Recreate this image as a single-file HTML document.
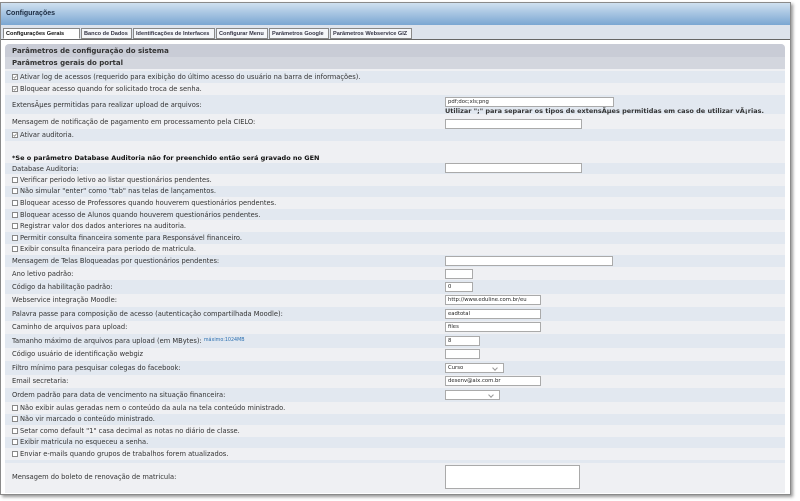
<!DOCTYPE html>
<html><head><meta charset="utf-8"><style>
*{margin:0;padding:0;box-sizing:border-box}
body{width:800px;height:501px;background:#fff;position:relative;overflow:hidden;font-family:"DejaVu Sans","Liberation Sans",sans-serif;font-size:6.7px;color:#333}
#frame{position:absolute;left:0;top:2px;width:791px;height:493px;border:1px solid #8a8a8a;box-shadow:2px 2px 3px #999;background:#fff}
#hdr{position:absolute;left:1px;top:3px;width:789px;height:22px;background:linear-gradient(#cfe0f0,#7aa6d2);font:bold 7px "Liberation Sans",sans-serif;color:#1a2a40;padding:7px 5px}
#tabbar{position:absolute;left:1px;top:25px;width:789px;height:15px;background:#dde3ec;border-bottom:1px solid #666}
.tab{position:absolute;top:3px;height:11px;border:1px solid #888;background:#f4f6f9;font:bold 5.6px "Liberation Sans",sans-serif;color:#334;padding:2px 2px;white-space:nowrap}
.tab.a{background:#fff;border-bottom-color:#fff;color:#111}
#panel{position:absolute;left:5px;top:44px;width:780px;height:449px;background:#eff0f3;border-radius:4px 4px 0 0}
.r{position:absolute;left:5px;width:780px;padding-left:7px;display:flex;align-items:center;white-space:nowrap}
.b{background:#e2e8f0}.g{background:#eff0f3}
.h{background:#c9ccd6;font-weight:bold;font-size:7px;color:#333}
.cb{display:inline-block;width:6px;height:6px;border:1px solid #888;background:#fff;margin-right:2px;position:relative}
.cb svg{position:absolute;left:0;top:0}
.in{position:absolute;height:10px;background:#fff;border:1px solid #aaa;font-size:5.3px;padding:1px 2px;color:#222}
.sel::after{content:"";position:absolute;right:6px;top:2px;width:3px;height:3px;border-right:1px solid #999;border-bottom:1px solid #999;transform:rotate(45deg)}
</style></head><body>
<div id="frame"></div>
<div id="hdr">Configurações</div>
<div id="tabbar">
<div class="tab a" style="left:2px;width:77px">Configurações Gerais</div>
<div class="tab" style="left:80px;width:51px">Banco de Dados</div>
<div class="tab" style="left:132px;width:82px">Identificações de Interfaces</div>
<div class="tab" style="left:215px;width:52px">Configurar Menu</div>
<div class="tab" style="left:268px;width:60px">Parâmetros Google</div>
<div class="tab" style="left:329px;width:82px">Parâmetros Webservice GIZ</div>
</div>
<div id="panel"></div>
<div class="r h" style="top:44px;height:13px;border-radius:4px 4px 0 0">Parâmetros de configuração do sistema</div>
<div class="r h" style="top:57px;height:12px;background:#d3d6de">Parâmetros gerais do portal</div>
<div class="r b" style="top:71px;height:12px"><span class="cb"><svg width="4" height="4" viewBox="0 0 4 4"><path d="M0.5 2 L1.6 3.2 L3.6 0.6" fill="none" stroke="#777" stroke-width="0.7"/></svg></span>Ativar log de acessos (requerido para exibição do último acesso do usuário na barra de informações).</div>
<div class="r g" style="top:83px;height:12px"><span class="cb"><svg width="4" height="4" viewBox="0 0 4 4"><path d="M0.5 2 L1.6 3.2 L3.6 0.6" fill="none" stroke="#777" stroke-width="0.7"/></svg></span>Bloquear acesso quando for solicitado troca de senha.</div>
<div class="r b" style="top:95px;height:19px">ExtensÃµes permitidas para realizar upload de arquivos:</div>
<div class="r g" style="top:114px;height:15px">Mensagem de notificação de pagamento em processamento pela CIELO:</div>
<div class="r b" style="top:129px;height:12px"><span class="cb"><svg width="4" height="4" viewBox="0 0 4 4"><path d="M0.5 2 L1.6 3.2 L3.6 0.6" fill="none" stroke="#777" stroke-width="0.7"/></svg></span>Ativar auditoria.</div>
<div class="r g" style="top:141px;height:11px"></div>
<div class="r g" style="top:152px;height:11px;font-weight:bold;color:#111;font-size:6.5px">*Se o parâmetro Database Auditoria não for preenchido então será gravado no GEN</div>
<div class="r b" style="top:163px;height:11px">Database Auditoria:</div>
<div class="r g" style="top:174px;height:11.6px"><span class="cb"></span>Verificar periodo letivo ao listar questionários pendentes.</div>
<div class="r b" style="top:185.6px;height:11.6px"><span class="cb"></span>Não simular "enter" como "tab" nas telas de lançamentos.</div>
<div class="r g" style="top:197.2px;height:11.6px"><span class="cb"></span>Bloquear acesso de Professores quando houverem questionários pendentes.</div>
<div class="r b" style="top:208.8px;height:11.6px"><span class="cb"></span>Bloquear acesso de Alunos quando houverem questionários pendentes.</div>
<div class="r g" style="top:220.4px;height:11.6px"><span class="cb"></span>Registrar valor dos dados anteriores na auditoria.</div>
<div class="r b" style="top:232px;height:11.6px"><span class="cb"></span>Permitir consulta financeira somente para Responsável financeiro.</div>
<div class="r g" style="top:243.6px;height:11.6px"><span class="cb"></span>Exibir consulta financeira para periodo de matricula.</div>
<div class="r b" style="top:255.2px;height:12px">Mensagem de Telas Bloqueadas por questionários pendentes:</div>
<div class="r g" style="top:267.2px;height:13px">Ano letivo padrão:</div>
<div class="r b" style="top:280.2px;height:13.5px">Código da habilitação padrão:</div>
<div class="r g" style="top:293.7px;height:13.5px">Webservice integração Moodle:</div>
<div class="r b" style="top:307.2px;height:13.5px">Palavra passe para composição de acesso (autenticação compartilhada Moodle):</div>
<div class="r g" style="top:320.7px;height:13.5px">Caminho de arquivos para upload:</div>
<div class="r b" style="top:334.2px;height:13.5px">Tamanho máximo de arquivos para upload (em MBytes):&nbsp;<span style="color:#2a6fb0;font-size:4.8px">máximo:1024MB</span></div>
<div class="r g" style="top:347.7px;height:13.5px">Código usuário de identificação webgiz</div>
<div class="r b" style="top:361.2px;height:13.5px">Filtro mínimo para pesquisar colegas do facebook:</div>
<div class="r g" style="top:374.7px;height:13.5px">Email secretaria:</div>
<div class="r b" style="top:388.2px;height:13.5px">Ordem padrão para data de vencimento na situação financeira:</div>
<div class="r g" style="top:401.7px;height:11.8px"><span class="cb"></span>Não exibir aulas geradas nem o conteúdo da aula na tela conteúdo ministrado.</div>
<div class="r b" style="top:413.5px;height:11.6px"><span class="cb"></span>Não vir marcado o conteúdo ministrado.</div>
<div class="r g" style="top:425.1px;height:11.6px"><span class="cb"></span>Setar como default "1" casa decimal as notas no diário de classe.</div>
<div class="r b" style="top:436.7px;height:11.6px"><span class="cb"></span>Exibir matricula no esqueceu a senha.</div>
<div class="r g" style="top:448.3px;height:11.6px"><span class="cb"></span>Enviar e-mails quando grupos de trabalhos forem atualizados.</div>
<div class="r b" style="top:459.9px;height:3px"></div>
<div class="r g" style="top:462.9px;height:29px">Mensagem do boleto de renovação de matricula:</div>

<div class="in" style="left:445px;top:97px;width:169px">pdf;doc;xls;png</div>
<div style="position:absolute;left:445px;top:107px;font-weight:bold;font-size:6.5px;color:#333;white-space:nowrap">Utilizar ";" para separar os tipos de extensÃµes permitidas em caso de utilizar vÃ¡rias.</div>
<div class="in" style="left:445px;top:119px;width:137px"></div>
<div class="in" style="left:445px;top:163px;width:137px"></div>
<div class="in" style="left:445px;top:256px;width:168px"></div>
<div class="in" style="left:445px;top:269px;width:28px"></div>
<div class="in" style="left:445px;top:282px;width:28px">0</div>
<div class="in" style="left:445px;top:295px;width:96px">http://www.eduline.com.br/eu</div>
<div class="in" style="left:445px;top:309px;width:96px">eadtotal</div>
<div class="in" style="left:445px;top:322px;width:96px">files</div>
<div class="in" style="left:445px;top:336px;width:35px">8</div>
<div class="in" style="left:445px;top:349px;width:35px"></div>
<div class="in sel" style="left:445px;top:363px;width:59px">Curso</div>
<div class="in" style="left:445px;top:376px;width:96px">desenv@aix.com.br</div>
<div class="in sel" style="left:445px;top:390px;width:55px"></div>
<div class="in" style="left:445px;top:465px;width:135px;height:24px"></div>
</body></html>
